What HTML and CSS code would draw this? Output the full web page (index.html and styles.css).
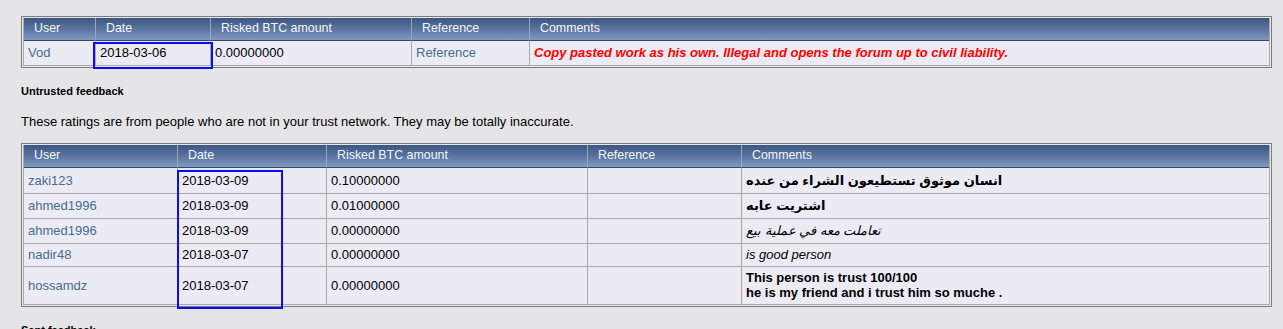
FILE: index.html
```html
<!DOCTYPE html>
<html>
<head>
<meta charset="utf-8">
<link rel="stylesheet" href="styles.css">
</head>
<body>
<div class="page">
  <div class="frame">
    <table class="tbl">
      <colgroup>
        <col class="w72"><col class="w115"><col class="w201"><col class="w118"><col>
      </colgroup>
      <thead>
        <tr><th>User</th><th>Date</th><th>Risked BTC amount</th><th>Reference</th><th>Comments</th></tr>
      </thead>
      <tbody>
        <tr class="r24">
          <td><a href="#">Vod</a></td>
          <td>2018-03-06</td>
          <td>0.00000000</td>
          <td><a href="#">Reference</a></td>
          <td><span class="neg">Copy pasted work as his own. Illegal and opens the forum up to civil liability.</span></td>
        </tr>
      </tbody>
    </table>
    <div class="mark mark-top"></div>
  </div>

  <h3 class="sect">Untrusted feedback</h3>
  <p class="note">These ratings are from people who are not in your trust network. They may be totally inaccurate.</p>

  <div class="frame">
    <table class="tbl">
      <colgroup>
        <col class="w154"><col class="w149"><col class="w261"><col class="w154"><col>
      </colgroup>
      <thead>
        <tr><th>User</th><th>Date</th><th>Risked BTC amount</th><th>Reference</th><th>Comments</th></tr>
      </thead>
      <tbody>
        <tr class="r25">
          <td><a href="#">zaki123</a></td>
          <td>2018-03-09</td>
          <td>0.10000000</td>
          <td></td>
          <td><b>انسان موثوق تستطيعون الشراء من عنده</b></td>
        </tr>
        <tr class="r24">
          <td><a href="#">ahmed1996</a></td>
          <td>2018-03-09</td>
          <td>0.01000000</td>
          <td></td>
          <td><b>اشتريت عابه</b></td>
        </tr>
        <tr class="r24">
          <td><a href="#">ahmed1996</a></td>
          <td>2018-03-09</td>
          <td>0.00000000</td>
          <td></td>
          <td><i>تعاملت معه في عملية بيع</i></td>
        </tr>
        <tr>
          <td><a href="#">nadir48</a></td>
          <td>2018-03-07</td>
          <td>0.00000000</td>
          <td></td>
          <td><i>is good person</i></td>
        </tr>
        <tr>
          <td><a href="#">hossamdz</a></td>
          <td>2018-03-07</td>
          <td>0.00000000</td>
          <td></td>
          <td><b>This person is trust 100/100<br>he is my friend and i trust him so muche .</b></td>
        </tr>
      </tbody>
    </table>
    <div class="mark mark-bottom"></div>
  </div>

  <h3 class="sect">Sent feedback</h3>
</div>
</body>
</html>
```

FILE: styles.css
```css
html, body {
  margin: 0;
  padding: 0;
  background: #e5e5e8;
}
body {
  font-family: "Liberation Sans", Arial, "DejaVu Sans", sans-serif;
  font-size: 13px;
  color: #000;
}
.page {
  padding: 16px 0 0 21px;
}
.frame {
  position: relative;
  width: 1247px;
  border: 1px solid #7c7c7c;
  padding: 1px;
  background: #e8e8ec;
}
.tbl {
  width: 1247px;
  table-layout: fixed;
  border-collapse: separate;
  border-spacing: 0;
  border-left: 1px solid #a9a9a9;
  border-right: 1px solid #a9a9a9;
  border-bottom: 1px solid #a9a9a9;
}
.w72 { width: 72px; }
.w115 { width: 115px; }
.w201 { width: 201px; }
.w118 { width: 118px; }
.w154 { width: 154px; }
.w149 { width: 149px; }
.w261 { width: 261px; }

.tbl th {
  height: 18px;
  line-height: 18px;
  padding: 1px 10px 3px;
  font-size: 12.4px;
  font-weight: normal;
  color: #f4f6fa;
  text-align: left;
  white-space: nowrap;
  background: linear-gradient(to bottom, #3c5682 0%, #58749f 50%, #7d9ac1 100%);
  border-right: 1px solid #9aa6b8;
  border-bottom: 1px solid #34476a;
}
.tbl th:last-child { border-right: none; }

.tbl td {
  background: #ecebf4;
  padding: 3px 4px 4px 4px;
  line-height: 15px;
  border-right: 1px solid #a9a9a9;
  border-top: 1px solid #a9a9a9;
  vertical-align: middle;
}
.tbl td:last-child { border-right: none; }
.tbl tbody tr:first-child td { border-top: none; }
.tbl tr.r24 td { padding-top: 4px; padding-bottom: 5px; }
.tbl tr.r25 td { padding-top: 5px; padding-bottom: 5px; }

.tbl a {
  color: #476c8e;
  text-decoration: none;
}
.neg {
  color: #ff0000;
  font-weight: bold;
  font-style: italic;
}

.mark {
  position: absolute;
  border: 2px solid #0a0aff;
  box-sizing: border-box;
  pointer-events: none;
}
.mark-top {
  left: 71px;
  top: 25px;
  width: 120px;
  height: 27px;
}
.mark-bottom {
  left: 155px;
  top: 26px;
  width: 106px;
  height: 139px;
}

.sect {
  font-size: 11px;
  font-weight: bold;
  line-height: 13px;
  margin: 17px 0 0;
}
.note {
  margin: 16px 0 14px;
  line-height: 15px;
}
```
